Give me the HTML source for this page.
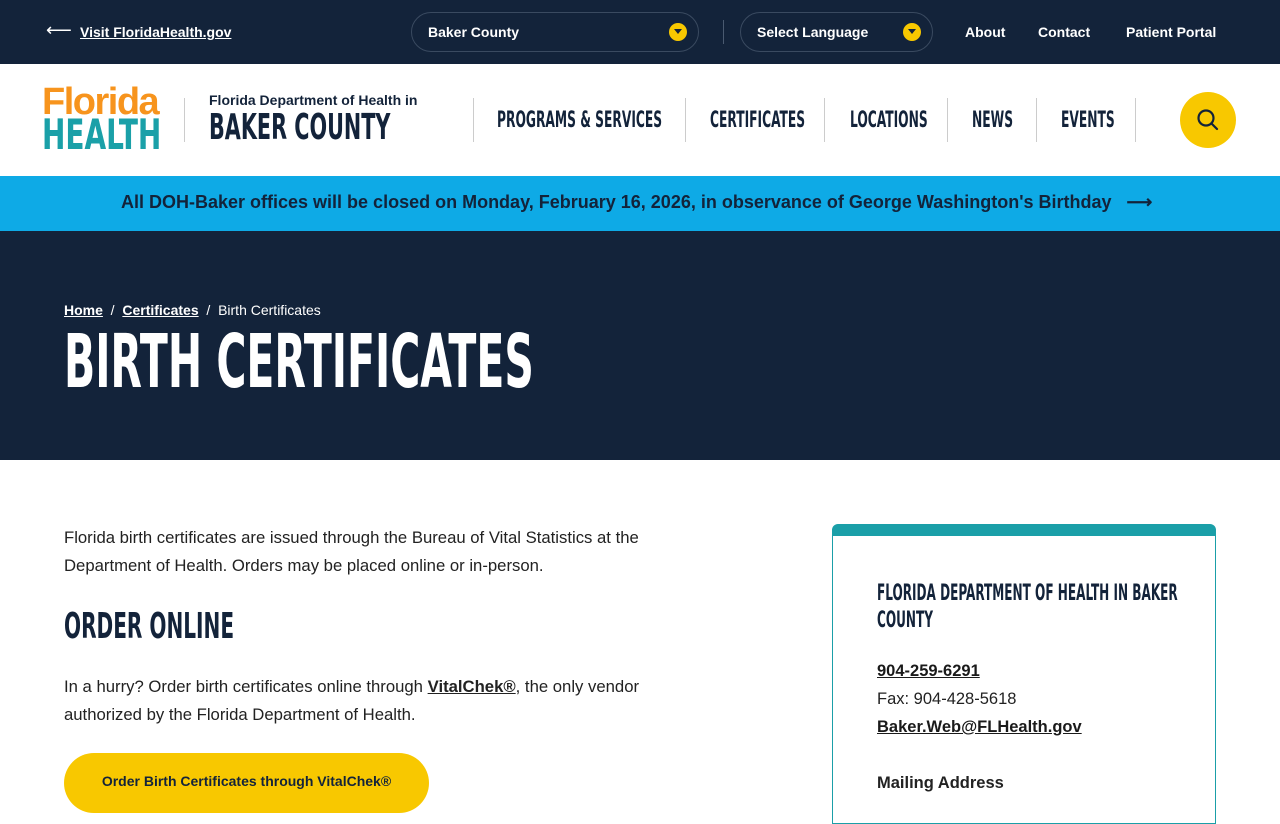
<!DOCTYPE html>
<html><head><meta charset="utf-8"><style>
*{box-sizing:border-box;margin:0;padding:0}
body{width:1280px;height:800px;overflow:hidden;font-family:"Liberation Sans",sans-serif;color:#1a1a1a;background:#fff;position:relative}
.a{position:absolute;white-space:nowrap}
.c{font-family:"DejaVu Sans Condensed","Liberation Sans",sans-serif;font-weight:bold;transform-origin:0 0;transform:scaleX(0.62)}
.top{position:absolute;left:0;top:0;width:1280px;height:64px;background:#13233a}
.pill{position:absolute;top:12px;height:40px;border:1px solid #3a4a60;border-radius:20px;color:#fff;font-weight:bold;font-size:14px;line-height:38px;padding-left:16px}
.dd{position:absolute;top:10px;width:18px;height:18px;border-radius:50%;background:#f8c800}
.dd:after{content:"";position:absolute;left:5px;top:6px;border-left:4px solid transparent;border-right:4px solid transparent;border-top:5px solid #13233a}
.tl{color:#fff;font-weight:bold;font-size:14px;top:24px}
.nav{top:108px;font-size:22px;color:#13233a}
.sep{position:absolute;top:98px;width:1px;height:44px;background:#ccc}
.bt{font-size:16.7px;line-height:28px;color:#222;white-space:normal;width:640px}
</style></head><body>
<div class="top"></div>
<div class="a" style="left:46px;top:20px;color:#fff;font-size:18px">⟵</div>
<div class="a tl" style="left:80px;text-decoration:underline">Visit FloridaHealth.gov</div>
<div class="pill" style="left:411px;width:288px">Baker County<div class="dd" style="left:257px"></div></div>
<div class="a" style="left:723px;top:20px;width:1px;height:24px;background:#4a5a70"></div>
<div class="pill" style="left:740px;width:193px">Select Language<div class="dd" style="left:162px"></div></div>
<div class="a tl" style="left:965px">About</div>
<div class="a tl" style="left:1038px">Contact</div>
<div class="a tl" style="left:1126px">Patient Portal</div>

<div class="a" style="left:42px;top:82px;font-size:38px;font-weight:bold;color:#f7941d;letter-spacing:-1.5px;line-height:40px">Florida</div>
<div class="a c" style="left:42px;top:114px;font-size:42px;color:#1aa0a8;line-height:42px;transform:scaleX(0.74)">HEALTH</div>
<div class="a" style="left:184px;top:98px;width:1px;height:44px;background:#ccc"></div>
<div class="a" style="left:209px;top:92px;font-size:14px;font-weight:bold;color:#13233a">Florida Department of Health in</div>
<div class="a c" style="left:209px;top:108px;font-size:36px;color:#13233a;line-height:40px;transform:scaleX(0.64)">BAKER COUNTY</div>
<div class="sep" style="left:473px"></div>
<div class="a c nav" style="left:497px">PROGRAMS &amp; SERVICES</div>
<div class="sep" style="left:685px"></div>
<div class="a c nav" style="left:710px">CERTIFICATES</div>
<div class="sep" style="left:824px"></div>
<div class="a c nav" style="left:850px">LOCATIONS</div>
<div class="sep" style="left:947px"></div>
<div class="a c nav" style="left:972px">NEWS</div>
<div class="sep" style="left:1036px"></div>
<div class="a c nav" style="left:1061px">EVENTS</div>
<div class="sep" style="left:1135px"></div>
<div class="a" style="left:1180px;top:92px;width:56px;height:56px;border-radius:50%;background:#f8c800">
<svg width="56" height="56" viewBox="0 0 56 56"><circle cx="26" cy="26" r="7.5" fill="none" stroke="#13233a" stroke-width="2.2"/><path d="M31.5 31.5L37 37" stroke="#13233a" stroke-width="2.2" stroke-linecap="round"/></svg></div>

<div class="a" style="left:0;top:176px;width:1280px;height:55px;background:#0eaae6"></div>
<div class="a" style="left:121px;top:192px;font-size:18px;font-weight:bold;color:#13233a">All DOH-Baker offices will be closed on Monday, February 16, 2026, in observance of George Washington's Birthday &nbsp; ⟶</div>

<div class="a" style="left:0;top:231px;width:1280px;height:229px;background:#13233a"></div>
<div class="a" style="left:64px;top:302px;font-size:14px;color:#fff"><b style="text-decoration:underline">Home</b> &nbsp;/&nbsp; <b style="text-decoration:underline">Certificates</b> &nbsp;/&nbsp; Birth Certificates</div>
<div class="a c" style="left:64px;top:322px;font-size:74px;color:#fff;line-height:80px;transform:scaleX(0.615)">BIRTH CERTIFICATES</div>

<div class="a bt" style="left:64px;top:524px">Florida birth certificates are issued through the Bureau of Vital Statistics at the Department of Health. Orders may be placed online or in-person.</div>
<div class="a c" style="left:64px;top:606px;font-size:36px;color:#13233a;line-height:42px">ORDER ONLINE</div>
<div class="a bt" style="left:64px;top:673px">In a hurry? Order birth certificates online through <b style="text-decoration:underline">VitalChek®</b>, the only vendor authorized by the Florida Department of Health.</div>
<div class="a" style="left:64px;top:753px;width:365px;height:60px;border-radius:30px;background:#f8c800;font-size:14px;font-weight:bold;color:#13233a;text-align:center;line-height:56px">Order Birth Certificates through VitalChek®</div>

<div class="a" style="left:832px;top:524px;width:384px;height:300px;border:1px solid #1a9fa8;border-top:12px solid #1a9fa8;border-radius:6px 6px 0 0"></div>
<div class="a c" style="left:877px;top:580px;font-size:22px;color:#13233a;line-height:27px;white-space:normal;width:525px;transform:scaleX(0.61)">FLORIDA DEPARTMENT OF HEALTH IN BAKER COUNTY</div>
<div class="a" style="left:877px;top:662px;font-size:16.5px;font-weight:bold;text-decoration:underline">904-259-6291</div>
<div class="a" style="left:877px;top:690px;font-size:16.5px;color:#222">Fax: 904-428-5618</div>
<div class="a" style="left:877px;top:718px;font-size:16.5px;font-weight:bold;text-decoration:underline">Baker.Web@FLHealth.gov</div>
<div class="a" style="left:877px;top:774px;font-size:16.5px;font-weight:bold;color:#222">Mailing Address</div>
</body></html>
